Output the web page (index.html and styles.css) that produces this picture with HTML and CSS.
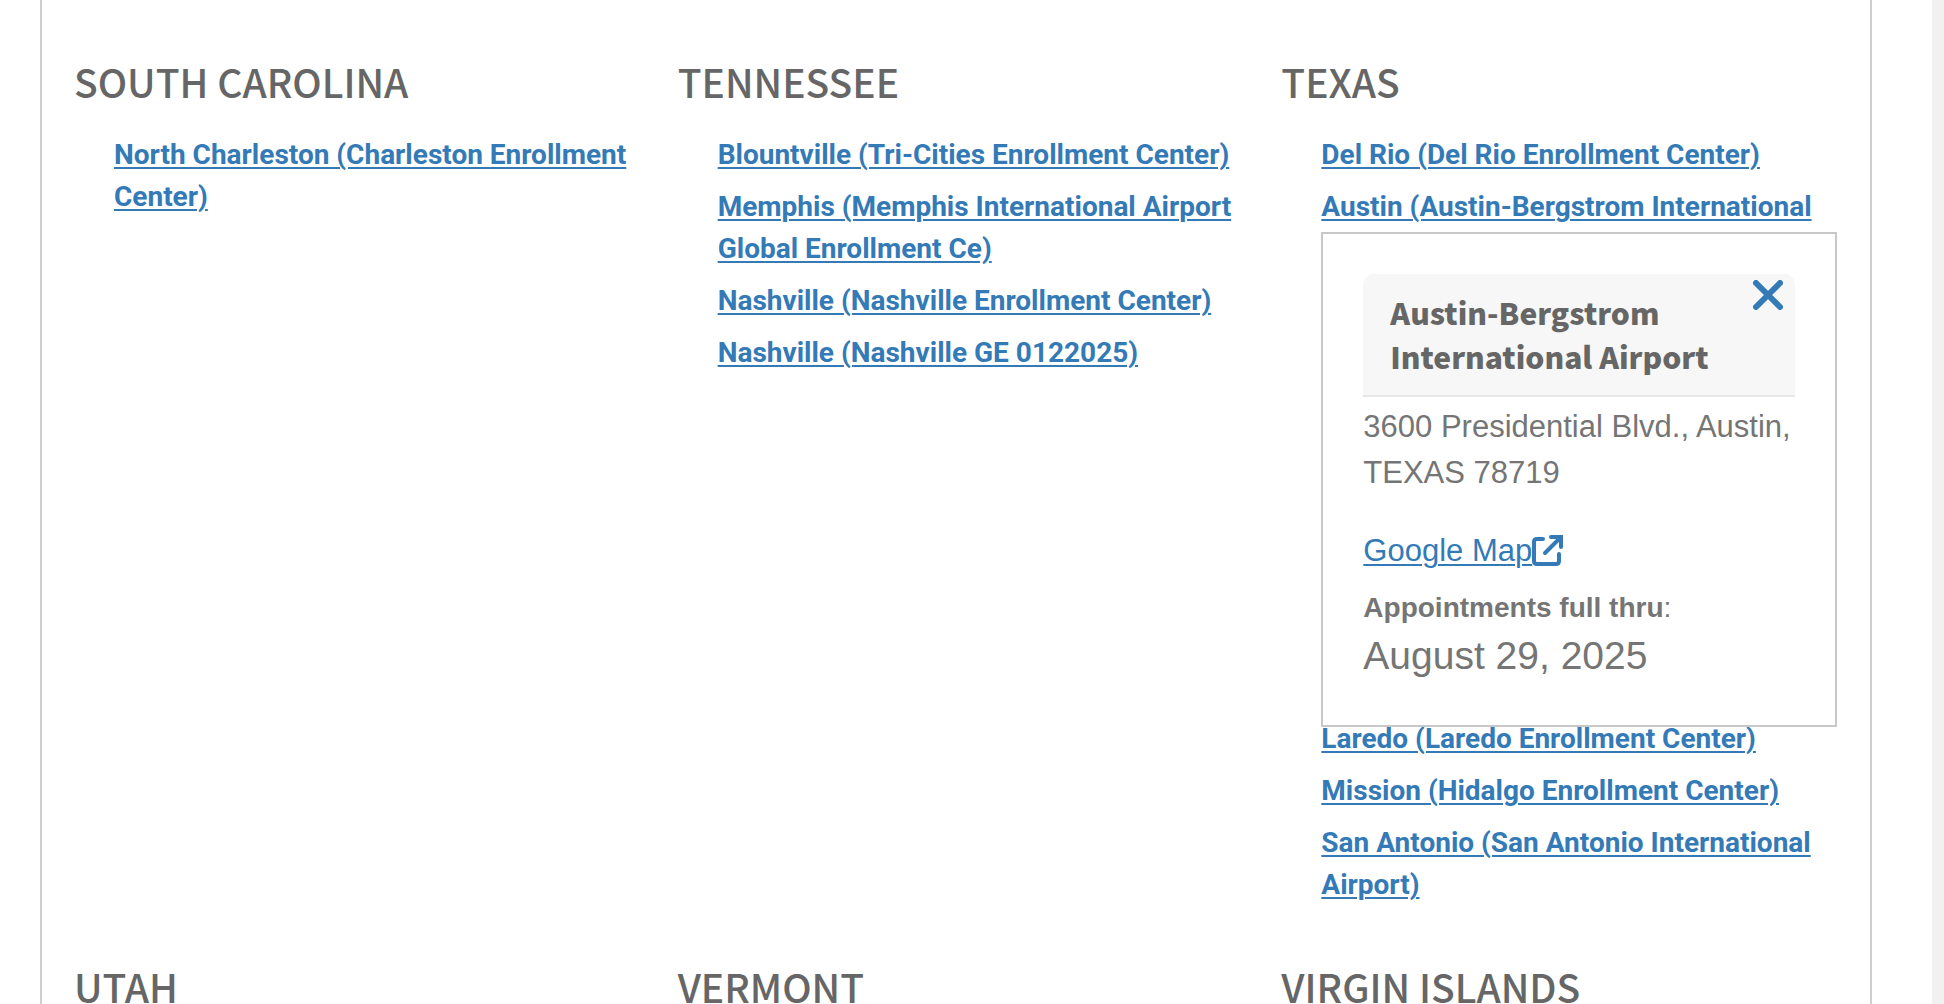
FILE: index.html
```html
<!DOCTYPE html>
<html lang="en">
<head>
<meta charset="utf-8">
<title>Enrollment Centers</title>
<link rel="stylesheet" href="styles.css">
</head>
<body>
<main class="panel">
  <section class="state">
    <h2>SOUTH CAROLINA</h2>
    <ul>
      <li><a href="#">North Charleston (Charleston Enrollment Center)</a></li>
    </ul>
  </section>
  <section class="state">
    <h2>TENNESSEE</h2>
    <ul>
      <li><a href="#">Blountville (Tri-Cities Enrollment Center)</a></li>
      <li><a href="#">Memphis (Memphis International Airport Global Enrollment Ce)</a></li>
      <li><a href="#">Nashville (Nashville Enrollment Center)</a></li>
      <li><a href="#">Nashville (Nashville GE 0122025)</a></li>
    </ul>
  </section>
  <section class="state">
    <h2>TEXAS</h2>
    <ul>
      <li><a href="#">Del Rio (Del Rio Enrollment Center)</a></li>
      <li class="open">
        <a href="#">Austin (Austin-Bergstrom International Airport)</a>
        <div class="popup" role="dialog" aria-labelledby="popup-title">
          <div class="popup-head">
            <h3 id="popup-title">Austin-Bergstrom International Airport</h3>
            <button class="close" type="button" aria-label="Close">
              <svg viewBox="0 0 30 30" width="30" height="30" aria-hidden="true"><path d="M3 3 27 27M27 3 3 27"/></svg>
            </button>
          </div>
          <p class="address">3600 Presidential Blvd., Austin, TEXAS 78719</p>
          <p class="map"><a href="#">Google Map</a><svg viewBox="0 0 32 32" width="32" height="32" aria-hidden="true"><path d="M11 4H5Q2 4 2 7V26Q2 29 5 29H24Q27 29 27 26V19M13 18 28 3"/><path d="M19 2H29V12"/></svg></p>
          <p class="full"><strong>Appointments full thru</strong>:</p>
          <p class="date">August 29, 2025</p>
        </div>
      </li>
      <li><a href="#">Brownsville (Brownsville International Airport)</a></li>
      <li><a href="#">Dallas (Dallas-Fort Worth International Airport)</a></li>
      <li><a href="#">El Paso (El Paso Enrollment Center)</a></li>
      <li><a href="#">Houston (George Bush Intercontinental Airport)</a></li>
      <li><a href="#">Houston (Houston Central Library)</a></li>
      <li><a href="#">Houston (Houston Enrollment Center)</a></li>
      <li><a href="#">Laredo (Laredo Enrollment Center)</a></li>
      <li><a href="#">Mission (Hidalgo Enrollment Center)</a></li>
      <li><a href="#">San Antonio (San Antonio International Airport)</a></li>
    </ul>
  </section>
  <section class="state"><h2>UTAH</h2></section>
  <section class="state"><h2>VERMONT</h2></section>
  <section class="state"><h2>VIRGIN ISLANDS</h2></section>
</main>
</body>
</html>
```

FILE: styles.css
```css
* {
  box-sizing: border-box;
}

html {
  overflow: hidden;
}

body {
  margin: 0;
  padding: 0 60px 0 40px;
  border-right: 12px solid #f1f1f1;
  background: #fff;
  color: #757575;
  font-family: "Liberation Sans", Arial, sans-serif;
}

h2,
h3,
p,
ul {
  margin: 0;
  padding: 0;
}

a {
  color: #337ab7;
  text-underline-offset: 3px;
  text-decoration-thickness: 2px;
}

.panel {
  display: grid;
  grid-template-columns: repeat(3, 1fr);
  gap: 42px 30px;
  padding: 53px 15px 0 32px;
  border: solid #cfcfcf;
  border-width: 0 2px;
}

h2 {
  color: #666;
  font: 500 39px/56px "Noto Sans CJK SC", sans-serif;
}

.state ul {
  padding: 25px 0 0 40px;
  list-style: none;
}

.state li {
  margin-bottom: 10px;
  font: 700 28px/42px Roboto, sans-serif;
}

.open {
  position: relative;
}

.popup {
  position: absolute;
  top: 46px;
  left: 0;
  width: 516px;
  padding: 40px 40px 41px;
  border: 2px solid #c8c8c8;
  background: #fff;
  font: 400 31px/46px "Liberation Sans", Arial, sans-serif;
}

.popup-head {
  display: flex;
  justify-content: space-between;
  align-items: flex-start;
  margin-bottom: 7px;
  padding: 6px 12px 17px 27px;
  border-bottom: 2px solid #e7e7e7;
  border-radius: 10px 10px 0 0;
  background: #f7f7f7;
}

.popup-head h3 {
  padding-top: 10px;
  color: #666;
  font: 900 30px/44px "Noto Sans CJK SC", sans-serif;
}

.close {
  display: flex;
  padding: 0;
  border: 0;
  background: none;
}

svg {
  fill: none;
  stroke: #337ab7;
  stroke-width: 6;
  stroke-linecap: round;
}

.map {
  display: flex;
  align-items: center;
  margin: 32px 0 14px;
}

.map svg {
  stroke-width: 4;
}

.full {
  font-size: 28px;
  line-height: 40px;
}

.date {
  font-size: 39px;
  line-height: 56px;
}
```
